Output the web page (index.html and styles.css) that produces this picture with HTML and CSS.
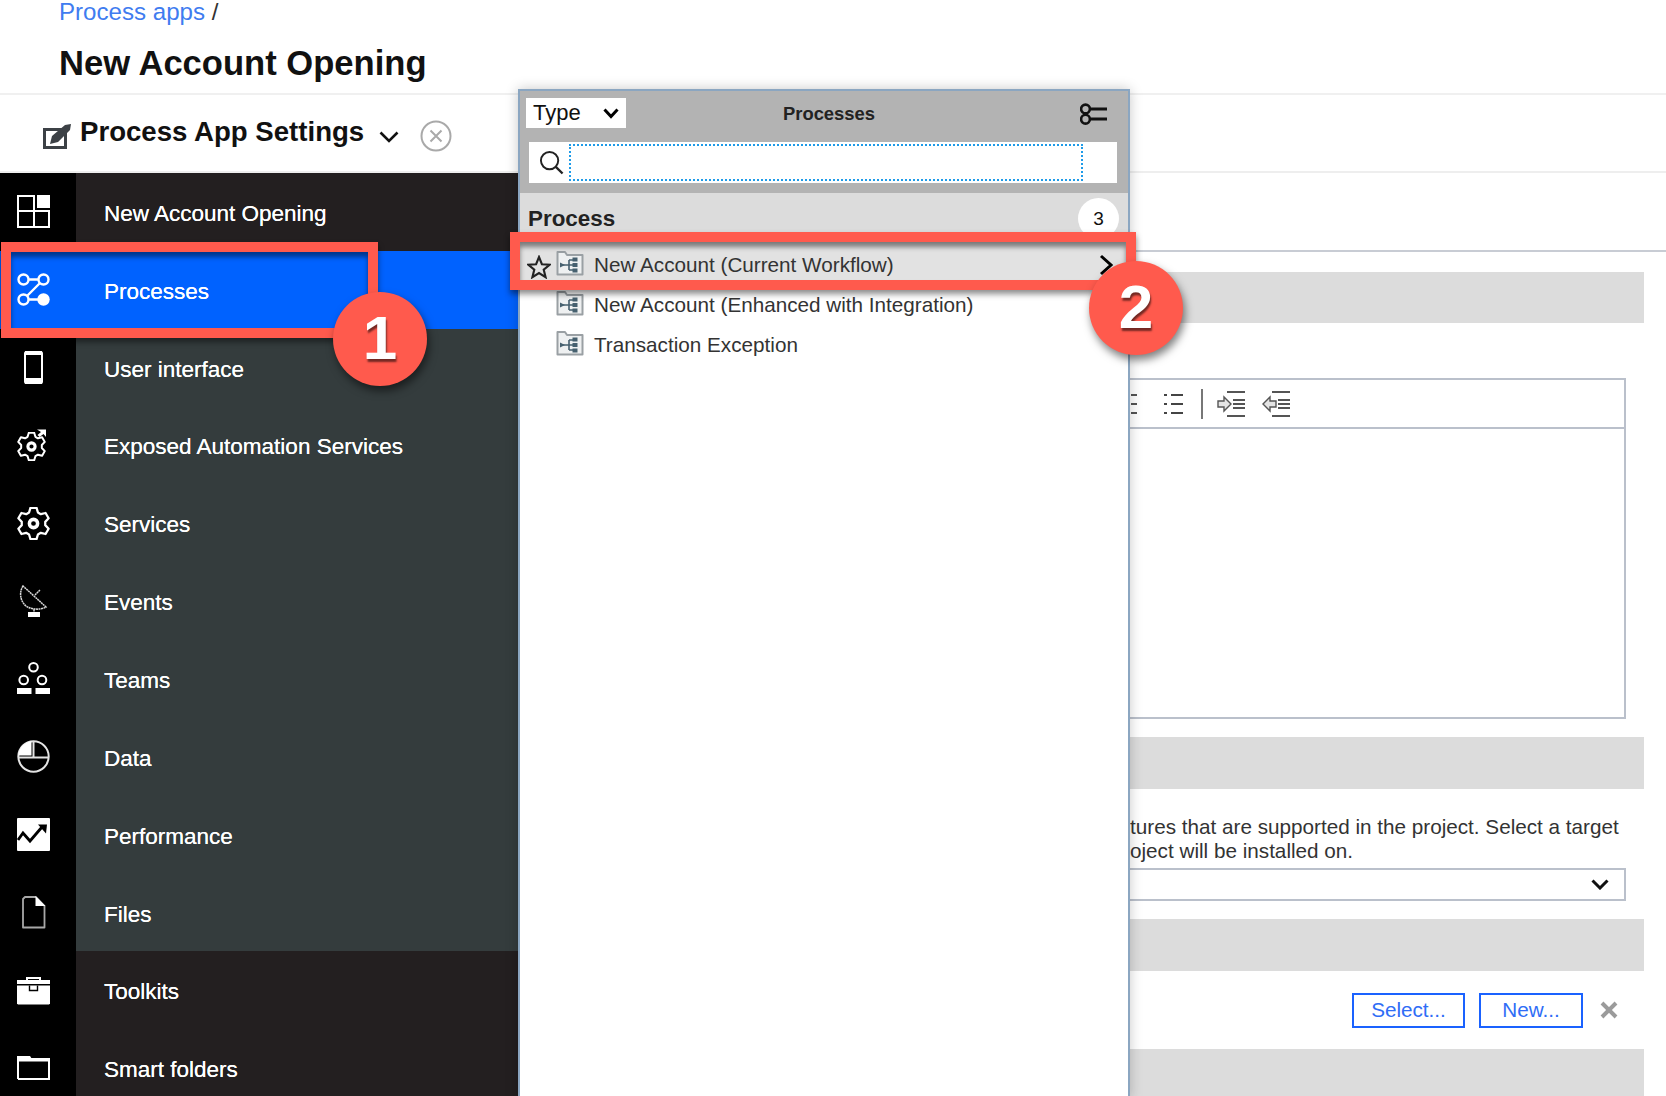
FILE: index.html
```html
<!DOCTYPE html>
<html lang="en">
<head>
<meta charset="utf-8">
<title>New Account Opening</title>
<link rel="stylesheet" href="styles.css">
</head>
<body>
<svg class="defs" width="0" height="0">
  <symbol id="gear" viewBox="0 0 32 32">
    <path fill="none" stroke="currentColor" stroke-width="2.2" stroke-linejoin="round" d="M11.69 5.34 13.04.78H18.96L20.31 5.34 23.08 6.94 27.7 5.83 30.66 10.95 27.39 14.4V17.6L30.66 21.05 27.7 26.17 23.08 25.06 20.31 26.66 18.96 31.22H13.04L11.69 26.66 8.92 25.06 4.3 26.17 1.34 21.05 4.61 17.6V14.4L1.34 10.95 4.3 5.83 8.92 6.94Z"/>
    <circle cx="16" cy="16" r="4" fill="none" stroke="currentColor" stroke-width="3.4"/>
  </symbol>
  <symbol id="proc" viewBox="0 0 28 26">
    <path fill="#eef0f1" stroke="#9aa0a4" stroke-width="2" stroke-linejoin="round" d="M1.5 24.5V2H9L11 5H26.5V24.5Z"/>
    <path fill="none" stroke="#46606f" stroke-width="1.6" d="M6 15H13M13 10V20M13 10H17M13 15H17M13 20H17"/>
    <path fill="#46606f" d="M4 12.5 9 15 4 17.5Z"/>
    <rect x="16.5" y="7.5" width="5" height="4" fill="#46606f"/>
    <rect x="16.5" y="13" width="5" height="4" fill="#46606f"/>
    <rect x="16.5" y="18.5" width="5" height="4" fill="#46606f"/>
  </symbol>
</svg>
<div class="page">
  <header class="head">
    <div class="crumb"><a class="crumb-link">Process apps</a> /</div>
    <h1 class="title">New Account Opening</h1>
  </header>
  <div class="tool">
    <svg class="tool-icon" viewBox="0 0 28 26"><rect x="1.5" y="6.5" width="21" height="18" fill="#fff" stroke="#3c4146" stroke-width="3"/><path fill="#3c4146" d="M0 5H19V8H0ZM7 21 9 13 22 2 28 1 27 7 15 19Z"/></svg>
    <span class="tool-title">Process App Settings</span>
    <svg class="tool-chev" viewBox="0 0 20 12"><path d="M1.5 1.5 10 10 18.5 1.5" fill="none" stroke="#111" stroke-width="2.6"/></svg>
    <svg class="tool-close" viewBox="0 0 32 32"><circle cx="16" cy="16" r="14.5" fill="none" stroke="#a9a9a9" stroke-width="2"/><path d="M10.5 10.5 21.5 21.5M21.5 10.5 10.5 21.5" stroke="#a9a9a9" stroke-width="2"/></svg>
  </div>
  <div class="body">
    <nav class="nav">
      <div class="row row-dark">
        <span class="rail"><svg class="ico" viewBox="0 0 33 33"><path fill="none" stroke="#fff" stroke-width="2" d="M1 1H17V32H1ZM1 16H17M17 16H32V32H17"/><rect x="20" y="0" width="13" height="13" fill="#fff"/></svg></span>
        <span class="label">New Account Opening</span>
      </div>
      <div class="row row-on">
        <span class="rail"><svg class="ico" viewBox="0 0 33 33"><g fill="none" stroke="#fff" stroke-width="2.4"><circle cx="6.5" cy="6.5" r="5"/><circle cx="26.5" cy="6.5" r="5"/><circle cx="6.5" cy="26.5" r="5"/><path d="M11.5 6.5H21.5M23 10 10 23M11.5 26.5H21.5"/></g><circle cx="26.5" cy="26.5" r="6.2" fill="#fff"/></svg></span>
        <span class="label">Processes</span>
      </div>
      <div class="row">
        <span class="rail"><svg class="ico" viewBox="0 0 33 33"><rect x="8" y="1" width="17" height="31" rx="1.5" fill="#000" stroke="#fff" stroke-width="2"/><rect x="8" y="0" width="17" height="4" fill="#fff"/><rect x="8" y="27" width="17" height="6" fill="#fff"/></svg></span>
        <span class="label">User interface</span>
      </div>
      <div class="row">
        <span class="rail"><svg class="ico" viewBox="0 0 33 33"><use href="#gear" x="0" y="3" width="29" height="29" color="#fff"/><path fill="#fff" d="M20 .5H29V8L26.5 5 22.5 8 20.5 6 24 3Z"/></svg></span>
        <span class="label">Exposed Automation Services</span>
      </div>
      <div class="row">
        <span class="rail"><svg class="ico" viewBox="0 0 32 32"><use href="#gear" width="32" height="32" color="#fff"/></svg></span>
        <span class="label">Services</span>
      </div>
      <div class="row">
        <span class="rail"><svg class="ico" viewBox="0 0 33 33"><path fill="none" stroke="#d8d8d8" stroke-width="1.5" stroke-dasharray="2 .5" d="M6 1C2 7 3 16 9 21 15 25 24 25 29 22ZM18 10 23 5M17 24V27"/><rect x="11" y="27" width="12" height="5" fill="#fff"/></svg></span>
        <span class="label">Events</span>
      </div>
      <div class="row">
        <span class="rail"><svg class="ico" viewBox="0 0 33 33"><g fill="none" stroke="#fff" stroke-width="2"><circle cx="16.5" cy="5.3" r="4.3"/><circle cx="6.7" cy="18" r="4.3"/><circle cx="25" cy="18" r="4.3"/></g><rect x="0" y="26" width="14.5" height="6" fill="#fff"/><rect x="18.5" y="26" width="14.5" height="6" fill="#fff"/></svg></span>
        <span class="label">Teams</span>
      </div>
      <div class="row">
        <span class="rail"><svg class="ico" viewBox="0 0 33 33"><circle cx="16.5" cy="16.5" r="15.2" fill="none" stroke="#e4e4e4" stroke-width="2"/><path fill="#fff" d="M1.3 15.5A15.2 15.2 0 0 1 14.5 1.3V15.5Z"/><path stroke="#e4e4e4" stroke-width="2" d="M1 17.5H32M16.5 1V17"/></svg></span>
        <span class="label">Data</span>
      </div>
      <div class="row">
        <span class="rail"><svg class="ico" viewBox="0 0 33 33"><rect x="0" y="0" width="33" height="33" rx="1" fill="#fff"/><path fill="none" stroke="#000" stroke-width="2.8" d="M1 22 6 15 13 23 25 9"/><path fill="#000" d="M21 6.5H30L29 15.5Z"/></svg></span>
        <span class="label">Performance</span>
      </div>
      <div class="row">
        <span class="rail"><svg class="ico" viewBox="0 0 33 33"><path fill="none" stroke="#a8a8a8" stroke-width="1.8" stroke-linejoin="round" d="M8 1H19L27.5 10V31.5H6V3Z"/><path fill="#fff" d="M18.5 0 28.5 10H18.5Z"/></svg></span>
        <span class="label">Files</span>
      </div>
      <div class="row row-dark">
        <span class="rail"><svg class="ico" viewBox="0 0 33 33"><path fill="none" stroke="#fff" stroke-width="2" d="M10 7V4H23V7"/><rect x="0" y="6" width="33" height="4" fill="#fff"/><path fill="#fff" d="M0 11.5H33V29.5L32 30.5H1L0 29.5Z"/><path fill="none" stroke="#000" stroke-width="1.4" d="M12.5 11.5V16.5H20.5V11.5"/></svg></span>
        <span class="label">Toolkits</span>
      </div>
      <div class="row row-dark">
        <span class="rail"><svg class="ico" viewBox="0 0 33 33"><path fill="none" stroke="#fff" stroke-width="2" d="M1 27V7H33M32 7V27H1"/><path fill="#fff" d="M0 4H13L15 7H33V9.5H0Z"/></svg></span>
        <span class="label">Smart folders</span>
      </div>
    </nav>
    <main class="main">
      <div class="tabs"></div>
      <section class="content">
        <div class="band"></div>
        <div class="editor">
          <div class="ed-bar">
            <svg class="tb tb-cut" viewBox="0 0 6 20"><path stroke="#555" stroke-width="2" d="M0 1H6M0 10H6M0 19H6"/></svg>
            <svg class="tb tb-list" viewBox="0 0 19 20"><path stroke="#444" stroke-width="2" d="M0 1H3M0 10H3M0 19H3M7 1H19M7 10H19M7 19H19"/></svg>
            <span class="tb-sep"></span>
            <svg class="tb tb-ind" viewBox="0 0 28 26"><path fill="#e4e4e4" stroke="#555" stroke-width="1.4" d="M1 10H7V6L14 13 7 20V16H1Z"/><path stroke="#555" stroke-width="2" d="M10 1H28M16 9H28M16 13H28M16 17H28M10 25H28"/></svg>
            <svg class="tb tb-out" viewBox="0 0 28 26"><path fill="#e4e4e4" stroke="#555" stroke-width="1.4" d="M14 10H8V6L1 13 8 20V16H14Z"/><path stroke="#555" stroke-width="2" d="M10 1H28M16 9H28M16 13H28M16 17H28M10 25H28"/></svg>
          </div>
          <div class="ed-area"></div>
        </div>
        <div class="band band-2"></div>
        <p class="desc">tures that are supported in the project. Select a target<br>oject will be installed on.</p>
        <div class="select">
          <svg class="sel-chev" viewBox="0 0 18 11"><path d="M1.5 1.5 9 9 16.5 1.5" fill="none" stroke="#111" stroke-width="3"/></svg>
        </div>
        <div class="band band-3"></div>
        <div class="actions">
          <button class="btn btn-sel">Select...</button>
          <button class="btn btn-new">New...</button>
          <svg class="act-x" viewBox="0 0 18 18"><path d="M2 2 16 16M16 2 2 16" stroke="#9b9b9b" stroke-width="4"/></svg>
        </div>
        <div class="band band-4"></div>
      </section>
    </main>
  </div>

  <aside class="pop">
    <div class="pop-head">
      <div class="pop-top">
        <div class="type">Type<svg class="type-chev" viewBox="0 0 16 11"><path d="M1.5 1.5 8 8.5 14.5 1.5" fill="none" stroke="#000" stroke-width="3"/></svg></div>
        <div class="pop-title">Processes</div>
        <svg class="pop-filter" viewBox="0 0 28 22"><g fill="none" stroke="#111" stroke-width="2.6"><circle cx="5.5" cy="6" r="4.4"/><circle cx="5.5" cy="16.2" r="4.4"/></g><path stroke="#111" stroke-width="3" d="M11 6H27M11 16H27"/></svg>
      </div>
      <div class="search">
        <svg class="search-ico" viewBox="0 0 26 26"><circle cx="11" cy="11" r="9" fill="none" stroke="#222" stroke-width="2"/><path d="M17.5 17.5 24.5 24.5" stroke="#222" stroke-width="2.4"/></svg>
        <div class="search-input"></div>
      </div>
    </div>
    <div class="group"><span class="group-name">Process</span><span class="badge">3</span></div>
    <div class="item item-on">
      <svg class="star" viewBox="0 0 24 24"><path fill="none" stroke="#222" stroke-width="2.1" d="M12 2 14.9 9.2 22.6 9.7 16.7 14.6 18.6 22.2 12 18 5.4 22.2 7.3 14.6 1.4 9.7 9.1 9.2Z"/></svg>
      <svg class="proc-ico"><use href="#proc"/></svg>
      <span class="item-text">New Account (Current Workflow)</span>
      <svg class="item-chev" viewBox="0 0 14 22"><path d="M2 2 12 11 2 20" fill="none" stroke="#000" stroke-width="3"/></svg>
    </div>
    <div class="item">
      <svg class="proc-ico"><use href="#proc"/></svg>
      <span class="item-text">New Account (Enhanced with Integration)</span>
    </div>
    <div class="item">
      <svg class="proc-ico"><use href="#proc"/></svg>
      <span class="item-text">Transaction Exception</span>
    </div>
  </aside>

  <div class="mark mark-1"></div>
  <div class="mark mark-2"></div>
  <div class="num num-1">1</div>
  <div class="num num-2">2</div>
</div>
</body>
</html>
```
FILE: styles.css
```css
* { box-sizing: border-box; }
html, body { margin: 0; padding: 0; background: #fff; }
body { font-family: "Liberation Sans", Arial, sans-serif; color: #222; overflow: hidden; }
.defs { position: absolute; }
.page { position: relative; width: 1666px; height: 1096px; overflow: hidden; background: #fff; }

.head { height: 95px; padding-left: 59px; border-bottom: 2px solid #f0f0f0; }
.crumb { font-size: 24.1px; line-height: 24px; color: #333; }
.crumb-link { color: #3f7cf0; }
.title { margin: 19px 0 0; font-size: 34.6px; line-height: 40px; font-weight: 700; color: #111; }

.tool { height: 78px; display: flex; align-items: center; padding-left: 43px; border-bottom: 2px solid #eeeeee; }
.tool-icon { width: 28px; height: 26px; margin-top: 6px; }
.tool-title { margin-left: 9px; margin-top: -2px; font-size: 27.6px; font-weight: 700; color: #111; }
.tool-chev { width: 20px; height: 12px; margin-left: 15px; margin-top: 8px; }
.tool-close { width: 32px; height: 32px; margin-left: 21px; margin-top: 5px; }

.body { display: flex; height: 923px; }
.nav { width: 518px; flex: none; background: #343c3d; }
.row { display: flex; align-items: center; height: 77.85px; background: #343c3d; color: #fff; }
.row-dark { background: #231f20; }
.row-on { background: #0062ff; }
.rail { width: 76px; height: 100%; flex: none; display: flex; align-items: center; justify-content: center; padding-right: 9px; background: #000; }
.row-on .rail { background: transparent; }
.ico { width: 33px; height: 33px; }
.label { margin-left: 28px; padding-top: 4px; font-size: 22.5px; text-shadow: 0 0 .6px #fff; }

.main { flex: 1; min-width: 0; }
.tabs { height: 79px; border-bottom: 2px solid #c8ccd4; }
.content { padding: 20px 22px 0 12px; }
.band { height: 51px; background: #dcdcdc; }
.editor { margin: 55px 18px 0 0; height: 341px; border: 2px solid #bac0cb; }
.ed-bar { height: 49px; display: flex; align-items: center; border-bottom: 2px solid #bac0cb; padding-left: 594px; }
.tb { display: block; }
.tb-cut { width: 6px; height: 20px; margin-left: 5px; }
.tb-list { width: 19px; height: 20px; margin-left: 27px; }
.tb-sep { width: 2px; height: 30px; margin-left: 18px; background: #777; }
.tb-ind { width: 28px; height: 26px; margin-left: 14px; }
.tb-out { width: 28px; height: 26px; margin-left: 17px; }
.band-2 { margin-top: 18px; height: 52px; }
.desc { margin: 26px 0 0; padding-left: 600px; font-size: 20.7px; line-height: 24px; color: #333; white-space: nowrap; }
.select { margin: 5px 18px 0 0; height: 33px; border: 2px solid #bac0cb; display: flex; align-items: center; justify-content: flex-end; padding-right: 15px; }
.sel-chev { width: 18px; height: 11px; }
.band-3 { margin-top: 18px; height: 52px; }
.actions { display: flex; align-items: center; justify-content: flex-end; height: 78px; padding-right: 26px; }
.btn { height: 35px; padding: 0; background: #fff; border: 2px solid #1a62ff; border-radius: 0; font: 20.7px "Liberation Sans", Arial, sans-serif; color: #2f6df6; }
.btn-sel { width: 113px; }
.btn-new { width: 104px; margin-left: 14px; }
.act-x { width: 18px; height: 18px; margin-left: 17px; }
.band-4 { height: 60px; }

.pop { position: absolute; left: 518px; top: 89px; width: 612px; height: 1010px; background: #fff; border: 2px solid #8ba6c1; box-shadow: 0 0 12px rgba(0, 0, 0, .22); }
.pop-head { height: 102px; background: #b3b3b3; padding: 7px 9px 0 6px; }
.pop-top { display: flex; align-items: center; height: 30px; }
.type { width: 100px; height: 30px; flex: none; display: flex; align-items: center; justify-content: space-between; padding: 0 7px; background: #fff; font-size: 22px; color: #111; }
.type-chev { width: 16px; height: 11px; }
.pop-title { flex: 1; text-align: center; padding-right: 48px; padding-top: 2px; font-size: 18.4px; font-weight: 700; color: #222; }
.pop-filter { width: 28px; height: 22px; margin-right: 11px; margin-top: 2px; }
.search { display: flex; align-items: center; height: 41px; margin: 14px 2px 0 3px; padding: 0 34px 0 10px; background: #fff; }
.search-ico { width: 25px; height: 25px; flex: none; }
.search-input { flex: 1; height: 37px; margin-left: 5px; border: 2px dotted #1e9be8; }
.group { display: flex; align-items: center; justify-content: space-between; height: 50px; padding: 1px 9px 0 8px; background: #dcdcdc; }
.group-name { font-size: 22.4px; font-weight: 700; color: #222; }
.badge { width: 41px; height: 41px; border-radius: 50%; display: flex; align-items: center; justify-content: center; background: #fff; font-size: 19px; color: #111; }
.item { display: flex; align-items: center; height: 40px; padding-left: 36px; color: #333; font-size: 20.7px; }
.item-on { position: relative; height: 42px; padding-top: 2px; background: #e2e2e2; }
.star { position: absolute; left: 7px; top: 12px; width: 24px; height: 24px; }
.proc-ico { width: 28px; height: 26px; flex: none; margin-top: -4px; }
.item-text { margin-left: 10px; }
.item-chev { position: absolute; right: 15px; top: 11px; width: 14px; height: 22px; }

.mark { position: absolute; border: 10px solid #ff5a4d; box-shadow: 0 4px 6px rgba(0, 0, 0, .45), inset 0 5px 5px rgba(0, 0, 0, .45); }
.mark-1 { left: 1px; top: 242px; width: 377px; height: 96px; }
.mark-2 { left: 510px; top: 232px; width: 626px; height: 58px; }
.num { position: absolute; width: 94px; height: 94px; padding-bottom: 4px; border-radius: 50%; display: flex; align-items: center; justify-content: center; background: #ff5a4d; box-shadow: 2px 5px 8px rgba(0, 0, 0, .5); color: #fff; font-size: 62px; font-weight: 700; text-shadow: 1px 3px 2px rgba(0, 0, 0, .55); }
.num-1 { left: 333px; top: 292px; }
.num-2 { left: 1089px; top: 261px; }
```
